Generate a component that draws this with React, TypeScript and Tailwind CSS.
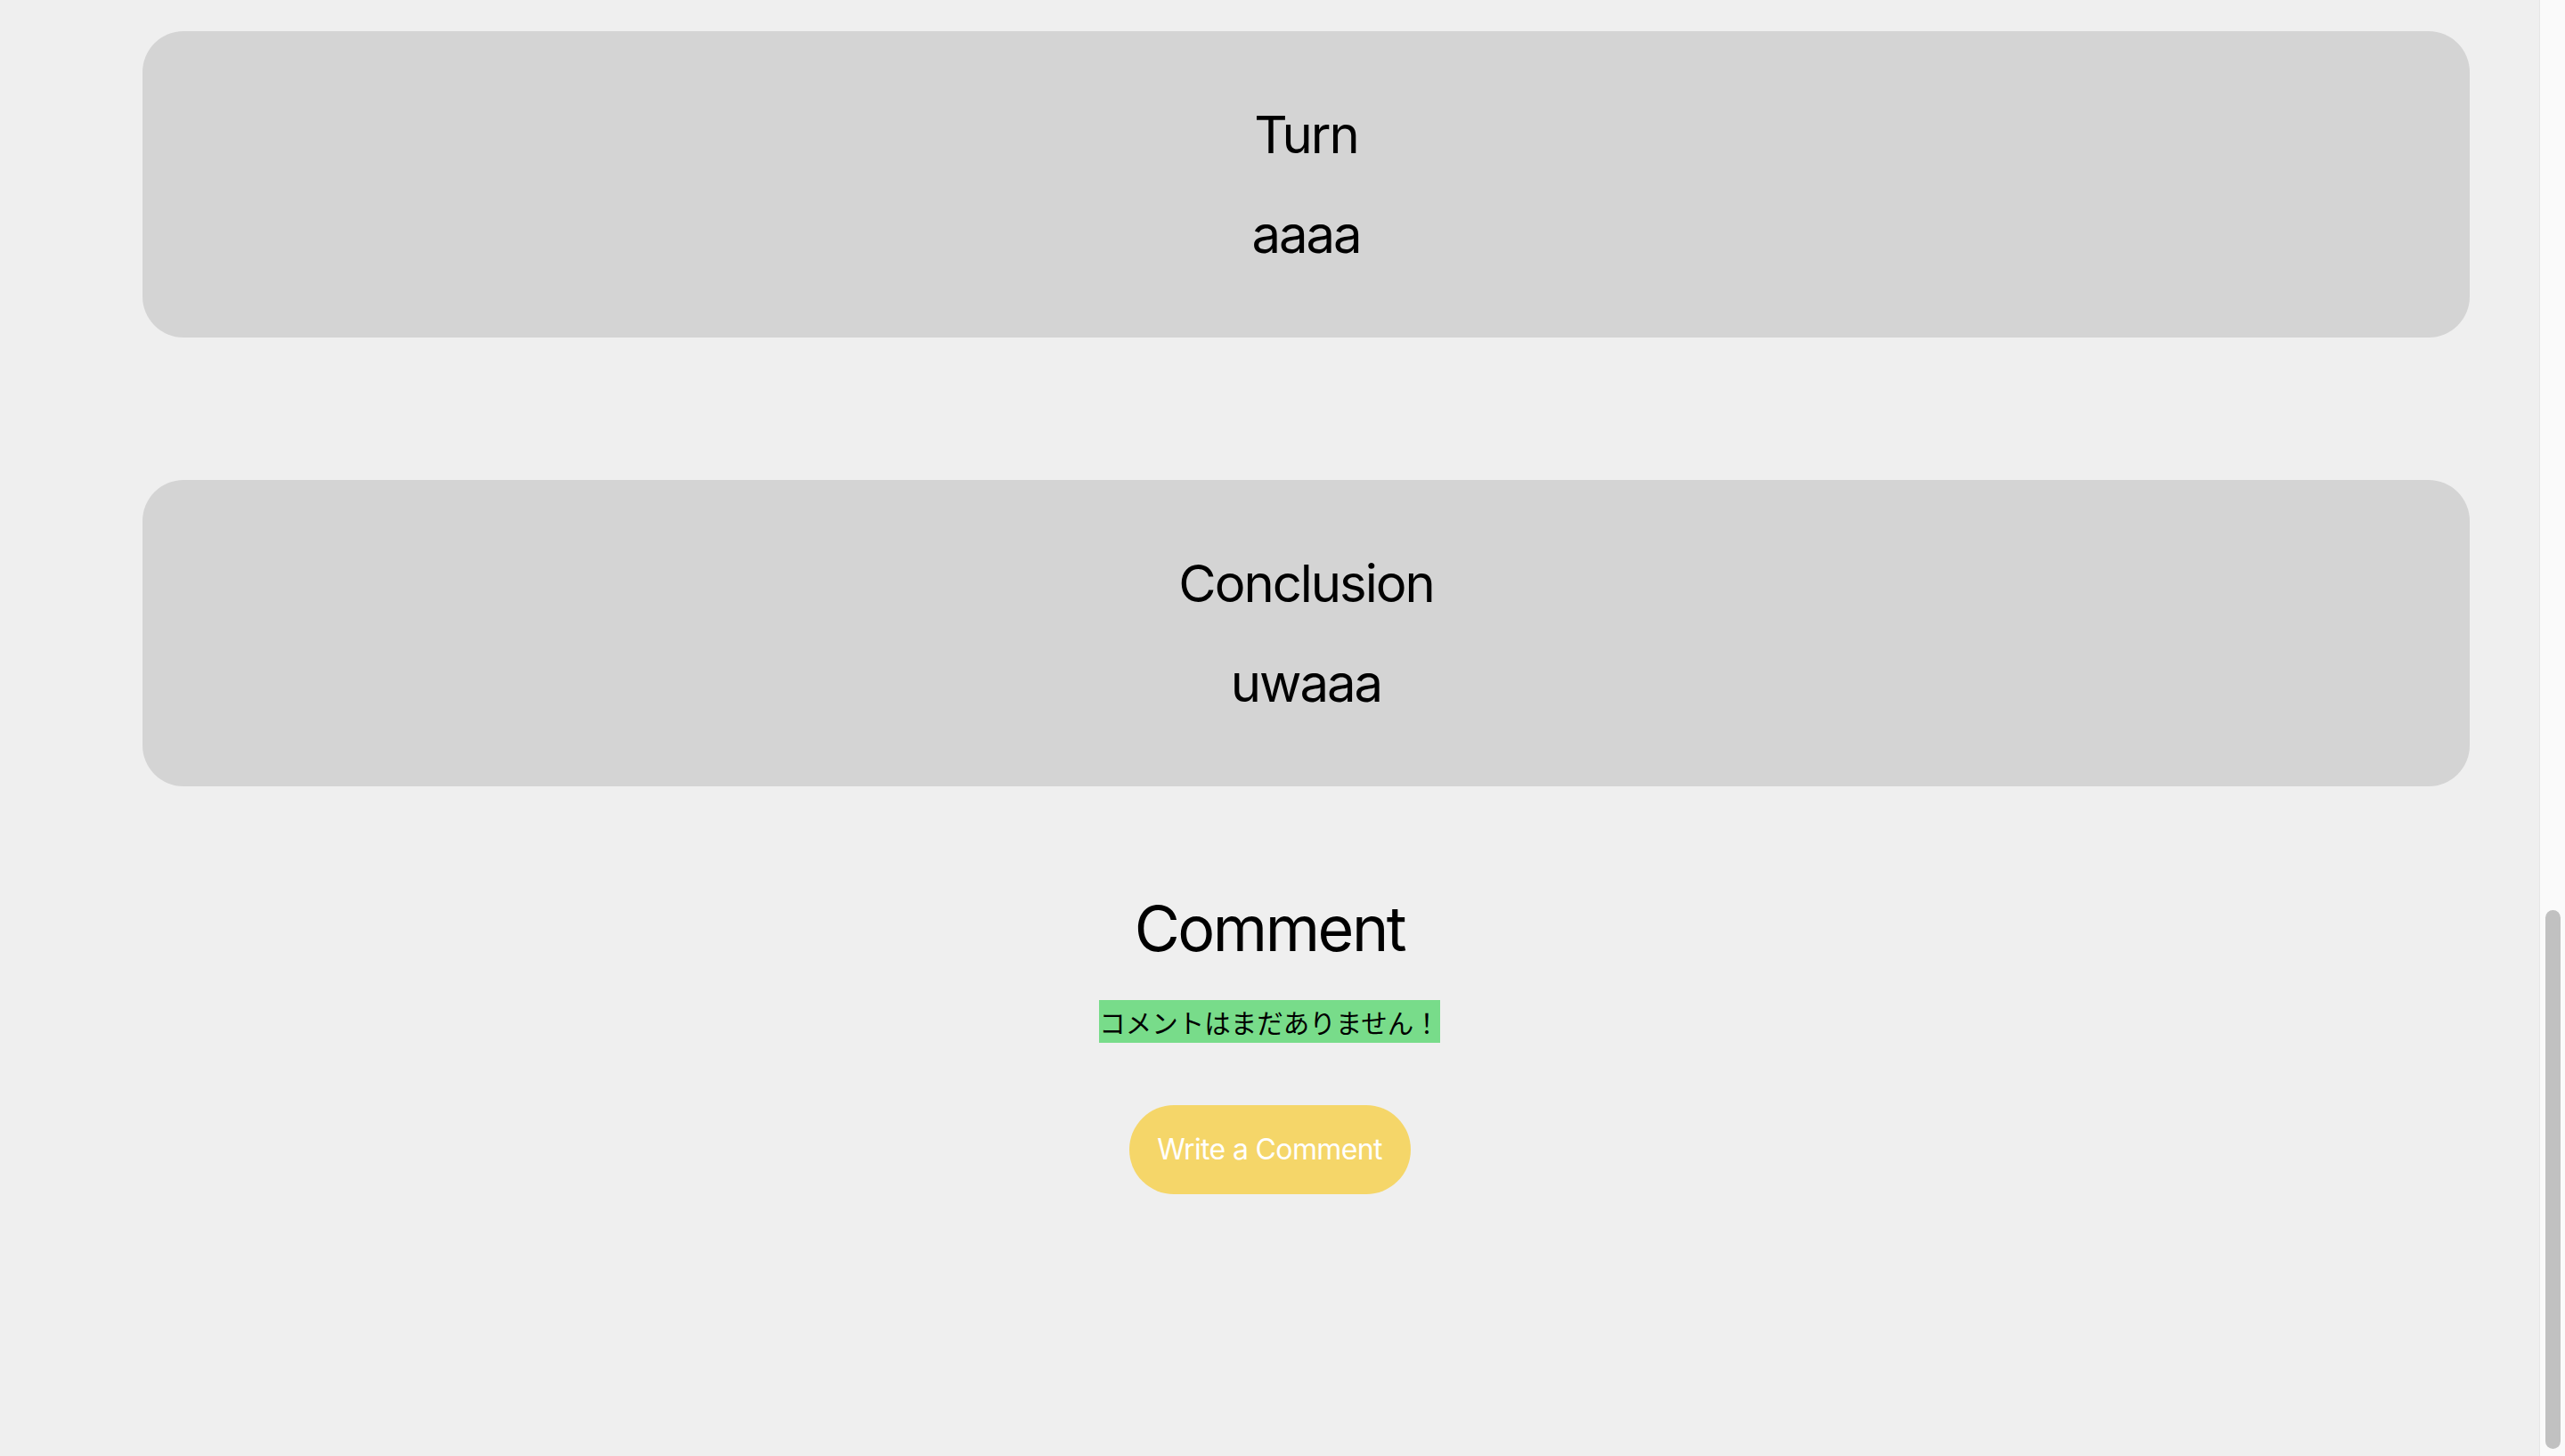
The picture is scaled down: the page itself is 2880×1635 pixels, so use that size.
import React from 'react';

type Section = { title: string; body: string };

const sections: Section[] = [
  { title: 'Turn', body: 'aaaa' },
  { title: 'Conclusion', body: 'uwaaa' },
];

const SectionCard: React.FC<{ section: Section }> = ({ section }) => (
  <div className="ml-[160px] mr-[78px] h-[344px] rounded-[46px] bg-[#d4d4d4] flex flex-col items-center pt-[81px] gap-[42px]">
    <h2 className="text-[58px] leading-[70px] tracking-[-0.035em] text-black">{section.title}</h2>
    <p className="text-[58px] leading-[70px] tracking-[-0.035em] text-black">{section.body}</p>
  </div>
);

export default function App() {
  return (
    <div className="h-[1635px] w-full flex overflow-hidden bg-[#efefef] font-['Inter',sans-serif]">
      <main className="flex-1 flex flex-col pt-[35px]">
        <div className="flex flex-col gap-[160px]">
          {sections.map((s) => (
            <SectionCard key={s.title} section={s} />
          ))}
        </div>

        <section className="flex flex-col items-center mt-[116px]">
          <h2 className="text-[70px] leading-[87px] tracking-[-0.035em] text-black">Comment</h2>
          <p className="mt-[37px] bg-[#78dc8a] h-[48px] leading-[48px] text-[29.5px] text-black font-['Noto_Sans_CJK_JP',sans-serif]">
            コメントはまだありません！
          </p>
          <button className="mt-[70px] h-[100px] w-[316px] rounded-full bg-[#f5d669] text-white text-[32px] tracking-[-0.02em]">
            Write a Comment
          </button>
        </section>
      </main>

      {/* fake scrollbar, page is shown scrolled to the bottom */}
      <div className="w-[29px] border-l border-[#e6e6e6] bg-[#fafafa] flex flex-col pt-[1022px] pb-[8px] pl-[6px] pr-[5px]">
        <div className="flex-1 rounded-full bg-[#c1c1c1]" />
      </div>
    </div>
  );
}
